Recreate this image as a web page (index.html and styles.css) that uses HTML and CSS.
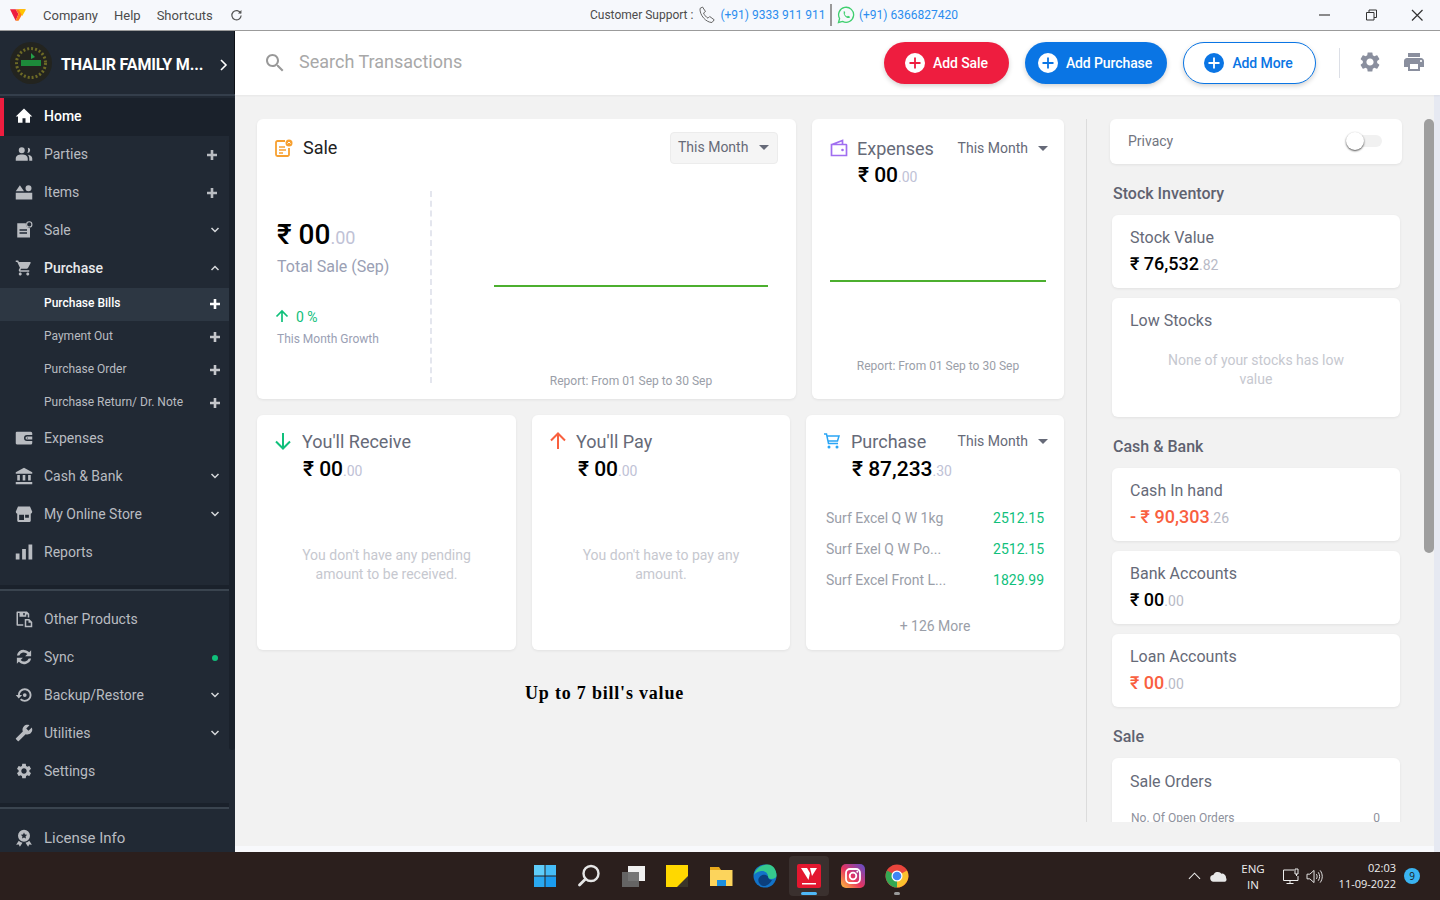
FILE: index.html
```html
<!DOCTYPE html>
<html lang="en">
<head>
<meta charset="utf-8">
<title>Vyapar</title>
<link rel="stylesheet" href="styles.css">
</head>
<body>
<svg class="sprite" xmlns="http://www.w3.org/2000/svg">
  <symbol id="i-home" viewBox="0 0 24 24"><path d="M10 21v-6h4v6h6v-8.500h3L12 2 1 12.500h3V21z"/></symbol>
  <symbol id="i-people" viewBox="0 0 24 24"><path d="M9 11a4 4 0 1 0 0-8 4 4 0 0 0 0 8zm7.500-.500a3 3 0 0 0 .5-6.800c.8 2.300.6 4.800-.5 6.800zM1 21v-3c0-3.500 3-5.500 8-5.500s8 2 8 5.500v3zm18 0h4v-3c0-2.500-2-4.500-6-5 1.500 1.300 2 3 2 5z"/></symbol>
  <symbol id="i-items" viewBox="0 0 24 24"><path d="M1 11l5.500-8 5.500 8zM18 11a4 4 0 1 0 0-8 4 4 0 0 0 0 8zM1 13h22v9H1z"/></symbol>
  <symbol id="i-sale" viewBox="0 0 24 24"><path d="M3 3h11.500c-.5 3 1.500 6 5.500 6.500V22H3zm3 8v2h10v-2zm0 4v2h10v-2z"/><circle cx="19" cy="4.500" r="3.500" fill="none" stroke="currentColor" stroke-width="1.500"/></symbol>
  <symbol id="i-cart" viewBox="0 0 24 24"><path d="M7 18c-1.100 0-1.990.9-1.990 2S5.900 22 7 22s2-.9 2-2-.9-2-2-2zM1 2v2h2l3.600 7.590-1.350 2.450c-.16.28-.25.61-.25.96 0 1.100.9 2 2 2h12v-2H7.420c-.14 0-.25-.11-.25-.25l.03-.12.9-1.630h7.450c.75 0 1.410-.41 1.750-1.030l3.580-6.490c.08-.14.12-.31.12-.48 0-.55-.45-1-1-1H5.210l-.94-2H1zm16 16c-1.100 0-1.990.9-1.990 2s.89 2 1.990 2 2-.9 2-2-.9-2-2-2z"/></symbol>
  <symbol id="i-wallet" viewBox="0 0 24 24"><path d="M1 5a1.500 1.500 0 0 1 1.500-1.500H21A2 2 0 0 1 23 5.500V8h-7a4 4 0 0 0 0 8h7v2.500a2 2 0 0 1-2 2H2.500A1.500 1.500 0 0 1 1 19zM16 10h7v4h-7a2 2 0 0 1 0-4zm.5 1.200a.8.8 0 1 0 0 1.600.8.8 0 0 0 0-1.600z"/></symbol>
  <symbol id="i-bank" viewBox="0 0 24 24"><path d="M12 1L1 7v2h22V7zM3 10.500h3.500V18H3zm7.250 0h3.500V18h-3.500zm7.250 0H21V18h-3.500zM1 20h22v3H1z"/></symbol>
  <symbol id="i-store" viewBox="0 0 24 24"><path d="M4 2h16l3 7a3 3 0 0 1-2 2.800V21a1.500 1.500 0 0 1-1.500 1.500h-15A1.500 1.500 0 0 1 3 21v-9.200A3 3 0 0 1 1 9zm1.500 11v7h6.500v-7zm8 0v4h5v-4z"/></symbol>
  <symbol id="i-bars" viewBox="0 0 24 24"><path d="M1 14h5v8H1zM9.500 8h5v14h-5zM18 2h5v20h-5z"/></symbol>
  <symbol id="i-other" viewBox="0 0 24 24"><path d="M3 2h13l3 3v5h-2V6h-2v3H6V4H4v15h7v2H3a1 1 0 0 1-1-1V3a1 1 0 0 1 1-1zm8 2v3h2V4z"/><path d="M13 12h6l4 4v7H13zm2 2v7h6v-4h-3v-3z"/></symbol>
  <symbol id="i-sync" viewBox="0 0 24 24"><path d="M12 2.500c2.800 0 5.300 1.200 7 3.200L21.500 3v8h-8l3-3A6.500 6.500 0 0 0 5.700 10H2.500A9.600 9.600 0 0 1 12 2.500zM2.500 13h8l-3 3a6.500 6.500 0 0 0 10.800-2h3.200a9.600 9.600 0 0 1-16.500 4.300L2.500 21z"/></symbol>
  <symbol id="i-backup" viewBox="0 0 24 24"><path d="M13 3c-4.970 0-9 4.030-9 9H1l4 4.500L9.500 12H6.500c0-3.600 2.900-6.500 6.500-6.500s6.500 2.900 6.500 6.500-2.900 6.500-6.500 6.500c-1.800 0-3.400-.7-4.600-1.900L6.600 18.400C8.270 20 10.510 21 13 21c4.970 0 9-4.030 9-9s-4.030-9-9-9z"/><circle cx="13" cy="12" r="2.500"/></symbol>
  <symbol id="i-wrench" viewBox="0 0 24 24"><path transform="matrix(-1 0 0 1 24 0)" d="M22.700 19l-9.100-9.100c.9-2.300.4-5-1.500-6.900-2-2-5-2.400-7.400-1.300L9 6 6 9 1.600 4.700C.4 7.100.9 10.100 2.900 12.100c1.900 1.900 4.600 2.400 6.900 1.500l9.100 9.100c.4.4 1 .4 1.400 0l2.300-2.300c.5-.4.500-1.100.1-1.400z"/></symbol>
  <symbol id="i-gear" viewBox="0 0 24 24"><path d="M19.140 12.940c.04-.3.06-.61.06-.94 0-.32-.02-.64-.07-.94l2.030-1.580c.18-.14.23-.41.12-.61l-1.920-3.320c-.12-.22-.37-.29-.59-.22l-2.390.96c-.5-.38-1.030-.7-1.620-.94l-.36-2.540c-.04-.24-.24-.41-.48-.41h-3.840c-.24 0-.43.17-.47.41l-.36 2.540c-.59.24-1.130.57-1.620.94l-2.390-.96c-.22-.08-.47 0-.59.22L2.740 8.870c-.12.21-.08.47.12.61l2.030 1.580c-.05.3-.09.63-.09.94s.02.64.07.94l-2.030 1.580c-.18.14-.23.41-.12.61l1.920 3.320c.12.22.37.29.59.22l2.390-.96c.5.38 1.030.7 1.620.94l.36 2.540c.05.24.24.41.48.41h3.840c.24 0 .44-.17.47-.41l.36-2.540c.59-.24 1.130-.56 1.620-.94l2.390.96c.22.08.47 0 .59-.22l1.920-3.320c.12-.22.07-.47-.12-.61l-2.010-1.580zM12 15.600c-1.980 0-3.600-1.620-3.600-3.600s1.620-3.600 3.600-3.600 3.600 1.620 3.600 3.600-1.620 3.600-3.600 3.600z"/></symbol>
  <symbol id="i-award" viewBox="0 0 24 24"><path d="M12 1a8 8 0 1 0 0 16 8 8 0 0 0 0-16zm0 3.500l1.300 2.700 3 .4-2.200 2.100.5 3L12 11.300l-2.600 1.400.5-3-2.200-2.100 3-.4zM5 15.500L1.500 21l3.500-.3L6.500 23.500 10 18.200a9 9 0 0 1-5-2.700zm14 0a9 9 0 0 1-5 2.700l3.500 5.300 1.500-2.800 3.500.3z"/></symbol>
  <symbol id="i-plus" viewBox="0 0 12 12"><path d="M4.700 1h2.600v3.700H11v2.600H7.300V11H4.700V7.300H1V4.700h3.700z"/></symbol>
  <symbol id="i-down" viewBox="0 0 12 12"><path d="M2.500 4l3.500 3.500L9.500 4" fill="none" stroke="currentColor" stroke-width="1.500"/></symbol>
  <symbol id="i-up" viewBox="0 0 12 12"><path d="M2.500 8L6 4.500 9.500 8" fill="none" stroke="currentColor" stroke-width="1.500"/></symbol>
  <symbol id="i-search" viewBox="0 0 24 24"><path d="M15.500 14h-.79l-.28-.27C15.410 12.590 16 11.110 16 9.500 16 5.910 13.090 3 9.500 3S3 5.910 3 9.500 5.910 16 9.500 16c1.610 0 3.090-.59 4.230-1.570l.27.28v.79l5 4.990L20.490 19l-4.990-5zm-6 0C7.010 14 5 11.990 5 9.500S7.010 5 9.500 5 14 7.010 14 9.500 11.990 14 9.500 14z"/></symbol>
  <symbol id="i-print" viewBox="0 0 24 24"><path d="M19 8H5c-1.660 0-3 1.340-3 3v6h4v4h12v-4h4v-6c0-1.660-1.340-3-3-3zm-3 11H8v-5h8v5zm3-7c-.55 0-1-.45-1-1s.45-1 1-1 1 .45 1 1-.45 1-1 1zm-1-9H6v4h12V3z"/></symbol>
  <symbol id="i-circle-plus" viewBox="0 0 20 20"><circle cx="10" cy="10" r="10"/><path d="M9.100 4.500h1.800v4.600h4.600v1.800h-4.600v4.600H9.100v-4.600H4.500V9.100h4.600z" fill="currentColor"/></symbol>
</svg>

<header class="titlebar">
  <div class="tb-left">
    <svg class="app-logo" viewBox="0 0 18 14"><path d="M0 1h6l3 5-3 7z" fill="#ee1d3f"/><path d="M6 1l3 5-3 7 3 0 7-12z" fill="#ff7a1a"/><path d="M9 1h8l-4 7z" fill="#ffc400"/></svg>
    <span class="menu-item">Company</span>
    <span class="menu-item">Help</span>
    <span class="menu-item">Shortcuts</span>
    <svg class="reload" viewBox="0 0 14 14"><path d="M11.500 4.500A5 5 0 1 0 12 7" fill="none" stroke="#555" stroke-width="1.300"/><path d="M8.500 4.800h3.800V1z" fill="#555"/></svg>
  </div>
  <div class="tb-support">
    <span>Customer Support :</span>
    <svg class="sup-ico" viewBox="0 0 18 18"><path d="M2 2.500L4.500 1l3 4.500-2 1.500c.8 2 2.500 4 4.500 5.200l1.700-1.700 4.500 3.300L14 16.500C8 16.500 1.500 9 2 2.500z" fill="none" stroke="#666" stroke-width="1"/></svg>
    <span class="sup-link">(+91) 9333 911 911</span>
    <i class="sup-sep"></i>
    <svg class="sup-ico" viewBox="0 0 18 18"><path d="M1.500 16.500l1.100-4A7.500 7.500 0 1 1 5.600 15.400z" fill="none" stroke="#3fcf6e" stroke-width="1.300"/><path d="M6 5.500l1.300-.5 1 2-.8 1c.6 1.100 1.400 1.900 2.500 2.500l1-.8 2 1-.5 1.300c-3 .9-7.100-3.500-5.500-6.500z" fill="#3fcf6e"/></svg>
    <span class="sup-link">(+91) 6366827420</span>
  </div>
  <div class="tb-win">
    <svg class="win-btn" viewBox="0 0 46 30"><path d="M17 15h11" stroke="#666" stroke-width="1.500"/></svg>
    <svg class="win-btn" viewBox="0 0 46 30"><path d="M18.500 12.500h7.500v7.500h-7.500zM21 12.500V10h7.500v7.500H26" fill="none" stroke="#333" stroke-width="1"/></svg>
    <svg class="win-btn" viewBox="0 0 46 30"><path d="M18 10l10.500 10.500M28.500 10L18 20.500" stroke="#333" stroke-width="1.200"/></svg>
  </div>
</header>

<div class="app">
  <aside class="sidebar">
    <div class="company">
      <svg class="company-logo" viewBox="0 0 42 42"><circle cx="21" cy="21" r="21" fill="#23241f"/><circle cx="21" cy="21" r="14.500" fill="none" stroke="#6d6a26" stroke-width="3" stroke-dasharray="2 2"/><path d="M11 18h20v6H11z" fill="#1d8a3a"/><path d="M21 11l4 4-4 2z" fill="#24a04a"/></svg>
      <span class="company-name">THALIR FAMILY M...</span>
      <svg class="company-arrow" viewBox="0 0 10 14"><path d="M2 2l5 5-5 5" fill="none" stroke="#fff" stroke-width="1.600"/></svg>
    </div>
    <div class="company-rule"></div>
    <div class="side-scroll">
      <nav class="nav">
        <a class="row row-home"><svg class="ico"><use href="#i-home"/></svg><span class="lab">Home</span></a>
        <a class="row"><svg class="ico"><use href="#i-people"/></svg><span class="lab">Parties</span><svg class="act-plus"><use href="#i-plus"/></svg></a>
        <a class="row"><svg class="ico"><use href="#i-items"/></svg><span class="lab">Items</span><svg class="act-plus"><use href="#i-plus"/></svg></a>
        <a class="row"><svg class="ico"><use href="#i-sale"/></svg><span class="lab">Sale</span><svg class="act-chev"><use href="#i-down"/></svg></a>
        <a class="row row-open"><svg class="ico"><use href="#i-cart"/></svg><span class="lab">Purchase</span><svg class="act-chev"><use href="#i-up"/></svg></a>
        <a class="sub sub-on"><span class="lab">Purchase Bills</span><svg class="sub-plus"><use href="#i-plus"/></svg></a>
        <a class="sub"><span class="lab">Payment Out</span><svg class="sub-plus"><use href="#i-plus"/></svg></a>
        <a class="sub"><span class="lab">Purchase Order</span><svg class="sub-plus"><use href="#i-plus"/></svg></a>
        <a class="sub"><span class="lab">Purchase Return/ Dr. Note</span><svg class="sub-plus"><use href="#i-plus"/></svg></a>
        <a class="row"><svg class="ico"><use href="#i-wallet"/></svg><span class="lab">Expenses</span></a>
        <a class="row"><svg class="ico"><use href="#i-bank"/></svg><span class="lab">Cash &amp; Bank</span><svg class="act-chev"><use href="#i-down"/></svg></a>
        <a class="row"><svg class="ico"><use href="#i-store"/></svg><span class="lab">My Online Store</span><svg class="act-chev"><use href="#i-down"/></svg></a>
        <a class="row"><svg class="ico"><use href="#i-bars"/></svg><span class="lab">Reports</span></a>
        <div class="nav-sep nav-sep-a"></div>
        <a class="row"><svg class="ico"><use href="#i-other"/></svg><span class="lab">Other Products</span></a>
        <a class="row"><svg class="ico"><use href="#i-sync"/></svg><span class="lab">Sync</span><i class="sync-dot"></i></a>
        <a class="row"><svg class="ico"><use href="#i-backup"/></svg><span class="lab">Backup/Restore</span><svg class="act-chev"><use href="#i-down"/></svg></a>
        <a class="row"><svg class="ico"><use href="#i-wrench"/></svg><span class="lab">Utilities</span><svg class="act-chev"><use href="#i-down"/></svg></a>
        <a class="row"><svg class="ico"><use href="#i-gear"/></svg><span class="lab">Settings</span></a>
        <div class="nav-sep nav-sep-b"></div>
        <a class="row row-license"><svg class="ico"><use href="#i-award"/></svg><span class="lab">License Info</span></a>
      </nav>
      <div class="side-rail"><div class="side-thumb"></div></div>
    </div>
  </aside>

  <main class="main">
    <div class="topbar">
      <svg class="search-ico"><use href="#i-search"/></svg>
      <span class="search-text">Search Transactions</span>
      <a class="btn btn-sale"><svg class="btn-ico"><use href="#i-circle-plus"/></svg>Add Sale</a>
      <a class="btn btn-purchase"><svg class="btn-ico"><use href="#i-circle-plus"/></svg>Add Purchase</a>
      <a class="btn btn-more"><svg class="btn-ico"><use href="#i-circle-plus"/></svg>Add More</a>
      <i class="top-sep"></i>
      <svg class="top-ico top-gear"><use href="#i-gear"/></svg>
      <svg class="top-ico top-print"><use href="#i-print"/></svg>
    </div>

    <div class="content">
      <div class="work">
        <div class="scroll">
          <div class="dash">
            <div class="dash-row dash-row-a">
              <section class="card sale-card">
                <div class="sale-head">
                  <svg class="card-ico" viewBox="0 0 18 18"><path d="M10 2H2.500A1.500 1.500 0 0 0 1 3.500v12A1.500 1.500 0 0 0 2.500 17h10a1.500 1.500 0 0 0 1.500-1.500V9" fill="none" stroke="#f7a030" stroke-width="1.800"/><path d="M4 8h6M4 11h7M4 14h4" stroke="#f7a030" stroke-width="1.400"/><circle cx="14" cy="4" r="3.500" fill="#f7a030"/><path d="M12.500 4.500L14 3l1.500 1.500" fill="none" stroke="#fff" stroke-width="1"/></svg>
                  <h2 class="sale-title">Sale</h2>
                  <div class="drop-box">This Month<i class="caret"></i></div>
                </div>
                <div class="sale-body">
                  <div class="sale-stats">
                    <div class="amt-xl">₹ 00<span class="dec-xl">.00</span></div>
                    <div class="stat-label">Total Sale (Sep)</div>
                    <div class="growth">
                      <svg class="growth-ico" viewBox="0 0 14 14"><path d="M7 13V2M1.500 7.500L7 2l5.500 5.500" fill="none" stroke="#10c07b" stroke-width="1.700"/></svg>
                      <span>0 %</span>
                    </div>
                    <div class="growth-label">This Month Growth</div>
                  </div>
                  <div class="sale-chart">
                    <div class="chart-line"></div>
                    <div class="report report-sale">Report: From 01 Sep to 30 Sep</div>
                  </div>
                </div>
              </section>

              <section class="card exp-card">
                <div class="mini-head">
                  <svg class="card-ico" viewBox="0 0 18 18"><path d="M2 5.500L12.500 1.500V5M1.500 5.500h14.500a.5.5 0 0 1 .5.5v10.500H1.500z" fill="none" stroke="#a06ef0" stroke-width="1.700"/><circle cx="12.500" cy="11" r="1.300" fill="#a06ef0"/></svg>
                  <h2 class="mini-title">Expenses</h2>
                  <div class="drop-plain">This Month<i class="caret"></i></div>
                </div>
                <div class="amt-md">₹ 00<span class="dec-md">.00</span></div>
                <div class="chart-line exp-line"></div>
                <div class="report report-exp">Report: From 01 Sep to 30 Sep</div>
              </section>
            </div>

            <div class="dash-row dash-row-b">
              <section class="card mini-card">
                <div class="mini-head">
                  <svg class="card-ico" viewBox="0 0 18 18"><path d="M9 1v15M2 9.500L9 16.500l7-7" fill="none" stroke="#10c07b" stroke-width="2"/></svg>
                  <h2 class="mini-title">You'll Receive</h2>
                </div>
                <div class="amt-md">₹ 00<span class="dec-md">.00</span></div>
                <p class="empty">You don't have any pending<br>amount to be received.</p>
              </section>
              <section class="card mini-card card-pay">
                <div class="mini-head">
                  <svg class="card-ico" viewBox="0 0 18 18"><path d="M9 17V2M2 8.500L9 1.500l7 7" fill="none" stroke="#f9603f" stroke-width="2"/></svg>
                  <h2 class="mini-title">You'll Pay</h2>
                </div>
                <div class="amt-md">₹ 00<span class="dec-md">.00</span></div>
                <p class="empty">You don't have to pay any<br>amount.</p>
              </section>
              <section class="card mini-card">
                <div class="mini-head">
                  <svg class="card-ico" viewBox="0 0 18 18"><path d="M1 2h2.500l2 9.500h9.500M4 4h12l-1.500 5H5" fill="none" stroke="#2aa5f5" stroke-width="1.500"/><circle cx="6" cy="15" r="1.500" fill="#2aa5f5"/><circle cx="14" cy="15" r="1.500" fill="#2aa5f5"/></svg>
                  <h2 class="mini-title">Purchase</h2>
                  <div class="drop-plain">This Month<i class="caret"></i></div>
                </div>
                <div class="amt-md">₹ 87,233<span class="dec-md">.30</span></div>
                <ul class="tx-list">
                  <li class="tx"><span>Surf Excel Q W 1kg</span><b class="tx-val">2512.15</b></li>
                  <li class="tx"><span>Surf Exel Q W Po...</span><b class="tx-val">2512.15</b></li>
                  <li class="tx"><span>Surf Excel Front L...</span><b class="tx-val">1829.99</b></li>
                </ul>
                <div class="tx-more">+ 126 More</div>
              </section>
            </div>
            <div class="bill-note">Up to 7 bill's value</div>
          </div>

          <div class="vline"></div>

          <div class="side-panel">
            <div class="card privacy">
              <span class="privacy-text">Privacy</span>
              <div class="toggle"><i class="knob"></i></div>
            </div>
            <h3 class="group">Stock Inventory</h3>
            <div class="card stat"><div class="stat-title">Stock Value</div><div class="stat-val">₹ 76,532<span class="dec-sm">.82</span></div></div>
            <div class="card stat stat-low"><div class="stat-title">Low Stocks</div><p class="empty low-text">None of your stocks has low<br>value</p></div>
            <h3 class="group">Cash &amp; Bank</h3>
            <div class="card stat"><div class="stat-title">Cash In hand</div><div class="stat-val val-red">- ₹ 90,303<span class="dec-sm">.26</span></div></div>
            <div class="card stat"><div class="stat-title">Bank Accounts</div><div class="stat-val">₹ 00<span class="dec-sm">.00</span></div></div>
            <div class="card stat"><div class="stat-title">Loan Accounts</div><div class="stat-val val-red">₹ 00<span class="dec-sm">.00</span></div></div>
            <h3 class="group">Sale</h3>
            <div class="card stat stat-orders"><div class="stat-title">Sale Orders</div><div class="orders-row"><span>No. Of Open Orders</span><span>0</span></div></div>
          </div>

          <div class="scroll-thumb"></div>
        </div>
        <div class="strip"></div>
      </div>
      <div class="rail"></div>
    </div>
  </main>
</div>

<footer class="taskbar">
  <div class="task-spacer"></div>
  <div class="task-apps">
    <div class="task-cell"><svg class="task-ico" viewBox="0 0 24 24"><path d="M1 1h10.500v10.500H1z" fill="#5fcdfa"/><path d="M12.500 1H23v10.500H12.500z" fill="#45bdf8"/><path d="M1 12.500h10.500V23H1z" fill="#2aa8f0"/><path d="M12.500 12.500H23V23H12.500z" fill="#1a9cf0"/></svg></div>
    <div class="task-cell"><svg class="task-ico" viewBox="0 0 24 24"><circle cx="14" cy="9.500" r="7.500" fill="none" stroke="#e6e6e6" stroke-width="2.400"/><path d="M8.500 15l-6 6" stroke="#e6e6e6" stroke-width="2.800" stroke-linecap="round"/></svg></div>
    <div class="task-cell"><svg class="task-ico" viewBox="0 0 24 24"><rect x="7" y="2" width="17" height="15" fill="#f0f0f0"/><rect x="1" y="8" width="17" height="15" fill="#6a6a6a" opacity=".92"/></svg></div>
    <div class="task-cell"><svg class="task-ico" viewBox="0 0 24 24"><rect x="1" y="1" width="22" height="22" fill="#ffd800"/><path d="M12 23l11-11v11z" fill="#3a342a"/></svg></div>
    <div class="task-cell"><svg class="task-ico" viewBox="0 0 24 24"><path d="M1 3h9l2 3H1z" fill="#e8a91c"/><path d="M1 6h22.500v16H1z" fill="#fcd45c"/><path d="M8 16h9v6H8z" fill="#1a8fe0"/></svg></div>
    <div class="task-cell"><svg class="task-ico" viewBox="0 0 24 24"><circle cx="12" cy="12" r="11.500" fill="#1273c9"/><path d="M1 11C3 3 10 .5 15 .5c5 0 8.500 5 8.500 11 0 2-2 3.500-5.500 3.500-2 0-3-1-3-2.500C15 9 12 6.500 8 7 4 7.500 2 9.500 1 11z" fill="#35c98e"/><path d="M15 12.500c0 2 1.500 3.500 4 3.500-2 4-6 6.500-9 6-4-1-6.500-6-3-9.500 2.500-2.500 6-2 8 0z" fill="#0c3f7d"/></svg></div>
    <div class="task-cell task-active"><svg class="task-ico" viewBox="0 0 24 24"><rect width="24" height="24" rx="2" fill="#e3172f"/><path d="M4 4h6l3 5-1.500 7z" fill="#fff"/><path d="M13 4h7l-5 8z" fill="#fff"/><path d="M5 19h14v1.500H5z" fill="#fff"/></svg><i class="task-bar"></i></div>
    <div class="task-cell"><svg class="task-ico" viewBox="0 0 24 24"><defs><linearGradient id="ig" x1="0" y1="1" x2="1" y2="0"><stop offset="0" stop-color="#fdc23c"/><stop offset=".45" stop-color="#e8345f"/><stop offset="1" stop-color="#5a4fcf"/></linearGradient></defs><rect width="24" height="24" rx="5" fill="url(#ig)"/><rect x="5" y="5" width="14" height="14" rx="4" fill="none" stroke="#fff" stroke-width="1.800"/><circle cx="12" cy="12" r="3.300" fill="none" stroke="#fff" stroke-width="1.800"/><circle cx="16.300" cy="7.700" r="1" fill="#fff"/></svg></div>
    <div class="task-cell"><svg class="task-ico" viewBox="0 0 24 24"><circle cx="12" cy="12" r="11.500" fill="#e8453c"/><path d="M12 12L22 6.500A11.500 11.500 0 0 1 12 23.500z" fill="#fbc02d"/><path d="M12 12l-10 -5.500A11.500 11.500 0 0 0 12 23.500z" fill="#34a853"/><circle cx="12" cy="12" r="5.500" fill="#fff"/><circle cx="12" cy="12" r="4.300" fill="#3f85f4"/></svg><i class="task-dot"></i></div>
  </div>
  <div class="tray">
    <svg class="tray-chev" viewBox="0 0 14 8"><path d="M1 7l6-6 6 6" fill="none" stroke="#eee" stroke-width="1.100"/></svg>
    <svg class="tray-cloud" viewBox="0 0 18 11"><path d="M4 11a3.500 3.500 0 0 1-.5-7A5 5 0 0 1 12 2.500 4.300 4.300 0 0 1 17 7c1 1.500.5 4-1.500 4z" fill="#e8e8e8"/></svg>
    <div class="tray-lang">ENG<br>IN</div>
    <svg class="tray-net" viewBox="0 0 18 17"><path d="M12 2H1.500v10.500H16V8M8 12.500V15.500M4.500 15.500h7" fill="none" stroke="#eee" stroke-width="1"/><path d="M13 1h3v5h-3zM14.500 6v2" fill="none" stroke="#eee" stroke-width="1"/></svg>
    <svg class="tray-vol" viewBox="0 0 18 16"><path d="M1 5.500h3L8.500 1.500v13L4 10.500H1z" fill="none" stroke="#eee" stroke-width="1"/><path d="M11 5.500c1 1.500 1 3.500 0 5M13 3.500c2 3 2 6 0 9M15 1.500c3 4 3 9 0 13" fill="none" stroke="#eee" stroke-width="1"/></svg>
    <div class="tray-clock">02:03<br>11-09-2022</div>
    <div class="tray-badge">9</div>
  </div>
</footer>
</body>
</html>
```

FILE: styles.css
```css
* { box-sizing: border-box; }
html, body { margin: 0; padding: 0; width: 1440px; height: 900px; overflow: hidden; }
body { font-family: Roboto, "Liberation Sans", sans-serif; background: #f2f2f2; color: #333; display: flex; flex-direction: column; }
.sprite { display: none; }
h2, h3, p, ul { margin: 0; padding: 0; font-weight: 400; }
ul { list-style: none; }

/* title bar */
.titlebar { height: 31px; flex: none; background: #f6f8fc; border-bottom: 1px solid #9b9b9b; display: grid; grid-template-columns: 570px 1fr auto; align-items: center; font-size: 12px; color: #4c4c4c; }
.tb-left { display: flex; align-items: center; padding-left: 10px; }
.app-logo { width: 17px; height: 14px; margin-right: 16px; }
.menu-item { margin-right: 16px; font-size: 13px; }
.reload { width: 13px; height: 13px; margin-left: 1px; }
.tb-support { display: flex; align-items: center; padding-left: 20px; }
.sup-ico { width: 18px; height: 18px; margin: 0 4px 0 5px; flex: none; }
.sup-link { color: #2b8def; }
.sup-sep { width: 1.500px; height: 22px; background: #999; margin-left: 5px; margin-right: 0; }
.tb-win { display: flex; padding-right: 0; }
.win-btn { width: 46px; height: 30px; display: block; }

/* layout */
.app { display: flex; flex: none; height: 821px; }

/* sidebar */
.sidebar { width: 235px; flex: none; background: #212934; display: flex; flex-direction: column; overflow: hidden; }
.company { height: 63px; flex: none; display: flex; align-items: center; padding-left: 10px; border-right: 1px solid #0e1218; }
.company-logo { width: 42px; height: 42px; flex: none; }
.company-name { margin-left: 9px; margin-top: 4px; width: 158px; font-size: 16px; font-weight: 700; color: #fff; white-space: nowrap; letter-spacing: -.15px; }
.company-arrow { width: 10px; height: 14px; margin-top: 5px; }
.company-rule { height: 2px; flex: none; background: #343e4b; }
.side-scroll { flex: 1; display: flex; min-height: 0; padding-top: 2px; background: #212934; }
.nav { width: 229px; flex: none; }
.side-rail { width: 6px; flex: none; }
.side-thumb { height: 652px; background: #1a212b; border-radius: 0 0 3px 3px; }

.row { height: 38px; display: flex; align-items: center; padding: 0 8px 2px 15px; font-size: 14px; color: #b9bcc1; }
.row-home { background: #1a212b; border-left: 4px solid #ee1d3f; padding-left: 11px; color: #fff; font-weight: 500; }
.row-open { color: #e8e9eb; font-weight: 500; }
.ico { width: 18px; height: 18px; fill: #b9bcc1; color: #b9bcc1; flex: none; }
.row-home .ico { fill: #fff; }
.lab { margin-left: 11px; flex: 1; white-space: nowrap; }
.row-license .lab { font-size: 15px; }
.act-plus { width: 12px; height: 12px; fill: #b9bcc1; margin-right: 3px; margin-top: 2px; }
.act-chev { width: 12px; height: 12px; color: #d5d7da; fill: none; }
.sync-dot { width: 6px; height: 6px; border-radius: 50%; background: #10c07b; margin-right: 3px; margin-top: 1px; }
.sub { height: 33px; display: flex; align-items: center; padding: 0 8px 4px 44px; font-size: 12px; color: #b9bcc1; }
.sub .lab { margin-left: 0; }
.sub-on { background: #2d3743; color: #fff; font-weight: 500; }
.sub-plus { width: 12px; height: 12px; fill: #c5c7cb; margin-top: 3px; }
.sub-on .sub-plus { fill: #fff; }
.nav-sep { height: 6px; background: linear-gradient(#1a212b 0 4px, #3a444f 4px); }
.nav-sep-a { margin: 13px 0 10px; }
.nav-sep-b { margin: 12px 0 11px; }

/* main */
.main { width: 1205px; flex: none; display: flex; flex-direction: column; min-height: 0; }
.topbar { height: 64px; flex: none; background: #fff; display: flex; align-items: center; padding-left: 28px; padding-right: 14px; box-shadow: 0 1px 2px rgba(0, 0, 0, .05); position: relative; }
.search-ico { width: 24px; height: 24px; fill: #999; flex: none; margin-top: -1px; }
.search-text { font-size: 18px; color: #a8a8a8; margin: 0 0 4px 12px; flex: 1; }
.btn { height: 42px; border-radius: 21px; display: flex; align-items: center; justify-content: center; font-size: 14px; font-weight: 500; letter-spacing: -.1px; margin-left: 16px; box-shadow: 0 2px 5px rgba(0, 0, 0, .18); }
.btn-ico { width: 20px; height: 20px; margin-right: 8px; flex: none; }
.btn-sale { width: 125px; background: #ee1d3f; color: #fff; }
.btn-sale .btn-ico { fill: #fff; color: #ee1d3f; }
.btn-purchase { width: 142px; padding-right: 2px; background: #0a75e4; color: #fff; }
.btn-purchase .btn-ico { fill: #fff; color: #0a75e4; }
.btn-more { width: 133px; padding-right: 2px; background: #fff; color: #0a75e4; border: 1px solid #0a75e4; }
.btn-more .btn-ico { fill: #0a75e4; color: #fff; }
.top-sep { width: 1px; height: 30px; background: #dcdfe6; margin-left: 23px; margin-right: 18px; }
.top-ico { width: 24px; height: 24px; fill: #8a8f9e; flex: none; margin-top: -3px; }
.top-print { margin-left: 20px; }

.content { flex: 1; display: flex; min-height: 0; }
.work { width: 1199px; flex: none; background: #f2f2f2; padding-top: 24px; }
.rail { width: 6px; flex: none; background: #e6e9f2; }
.scroll { height: 703px; display: flex; padding-left: 22px; overflow: hidden; }
.strip { height: 6px; margin-top: 24px; background: #f8f9fc; }
.vline { width: 1px; flex: none; background: #dcdcdc; margin: 0 23px 0 22px; }
.scroll-thumb { width: 10px; height: 434px; flex: none; background: #9e9e9e; border-radius: 5px; margin-left: 22px; }

.dash { width: 807px; flex: none; }
.dash-row { display: grid; column-gap: 16px; }
.dash-row-a { grid-template-columns: 539px 252px; height: 280px; }
.dash-row-b { grid-template-columns: 259px 258px 258px; height: 235px; margin-top: 16px; }
.card { background: #fff; border-radius: 6px; box-shadow: 0 1px 3px rgba(0, 0, 0, .07); display: flow-root; }

/* sale */
.sale-head { display: flex; align-items: center; height: 32px; margin-top: 13px; padding: 0 18px; }
.card-ico { width: 18px; height: 18px; flex: none; }
.sale-title { font-size: 18px; color: #222; margin: 0 0 2px 10px; flex: 1; }
.drop-box { width: 108px; height: 32px; background: #f5f5f5; border: 1px solid #ececec; border-radius: 4px; display: flex; align-items: center; padding: 0 0 2px 7px; font-size: 14px; color: #666a78; }
.caret { width: 0; height: 0; border-left: 5px solid transparent; border-right: 5px solid transparent; border-top: 5px solid #666a78; margin-left: 10px; }
.drop-box .caret { margin-left: 11px; }
.sale-body { display: flex; margin-top: 27px; height: 192px; }
.sale-stats { width: 175px; flex: none; border-right: 2px dashed #e4e6ee; padding-left: 20px; padding-top: 27px; }
.amt-xl { font-size: 28px; line-height: 34px; font-weight: 500; color: #000; white-space: nowrap; }
.dec-xl { font-size: 18px; font-weight: 400; color: #c0c2d6; }
.stat-label { font-size: 16px; line-height: 20px; color: #9aa0b4; margin-top: 2px; }
.growth { display: flex; align-items: center; margin-top: 30px; font-size: 14px; line-height: 20px; color: #10c07b; margin-left: -2px; }
.growth-ico { width: 14px; height: 14px; margin-right: 7px; margin-top: -2px; }
.growth-label { font-size: 12px; line-height: 16px; color: #9aa0b4; margin-top: 4px; }
.sale-chart { width: 274px; margin-left: 62px; }
.chart-line { height: 2px; background: #4caf2f; }
.sale-chart .chart-line { margin-top: 94px; }
.report { font-size: 12px; line-height: 16px; color: #9a9ea8; text-align: center; white-space: nowrap; }
.report-sale { margin-top: 86px; }

/* small cards */
.mini-head { display: flex; align-items: center; height: 28px; margin-top: 12px; padding: 0 16px 0 17px; }
.exp-card .mini-head { margin-top: 15px; padding-left: 18px; }
.mini-title { font-size: 18px; color: #666a78; margin-left: 10px; flex: 1; white-space: nowrap; }
.exp-card .mini-title { margin-left: 9px; }
.card-pay .mini-title { margin-left: 9px; }
.drop-plain { display: flex; align-items: center; font-size: 14px; color: #666a78; }
.amt-md { padding: 0 0 0 46px; font-size: 21px; line-height: 26px; font-weight: 500; color: #000; white-space: nowrap; }
.mini-card .amt-md { padding-top: 1px; }
.dec-md { font-size: 14px; font-weight: 400; color: #c0c2d6; }
.exp-line { margin: 90px 18px 0; }
.report-exp { margin-top: 76px; }
.empty { font-size: 14px; line-height: 19px; color: #c6c8cf; text-align: center; }
.mini-card .empty { margin-top: 62px; }
.tx-list { margin-top: 19px; padding: 0 20px; }
.tx { display: flex; justify-content: space-between; font-size: 14px; line-height: 31px; color: #9a9ea8; white-space: nowrap; }
.tx-val { font-weight: 400; color: #10c07b; }
.tx-more { margin-top: 20px; text-align: center; font-size: 14px; line-height: 20px; color: #9a9ea8; }
.bill-note { font-family: "Liberation Serif", serif; font-weight: 700; font-size: 18px; line-height: 22px; letter-spacing: .8px; color: #000; margin: 32px 0 0 268px; white-space: nowrap; }

/* right panel */
.side-panel { width: 292px; flex: none; }
.privacy { height: 45px; display: flex; align-items: center; justify-content: space-between; padding: 0 20px 0 18px; font-size: 14px; color: #72757f; }
.privacy-text { margin-bottom: 2px; }
.toggle { width: 36px; height: 12px; border-radius: 6px; background: #f1f1f1; display: flex; align-items: center; margin-top: -1px; }
.knob { width: 18px; height: 18px; border-radius: 50%; background: #fff; box-shadow: 0 1px 2px rgba(0, 0, 0, .7); }
.group { font-size: 16px; line-height: 22px; font-weight: 500; color: #5f6270; margin: 19px 0 10px 3px; }
.stat { margin: 0 2px 10px; height: 73px; padding: 11px 18px 0; }
.stat-title { font-size: 16px; line-height: 24px; color: #666a78; }
.stat-val { font-size: 18px; line-height: 27px; font-weight: 500; color: #000; white-space: nowrap; }
.dec-sm { font-size: 14px; font-weight: 400; color: #b8bac6; }
.val-red { color: #f9603f; }
.stat-low { height: 119px; margin-bottom: 0; }
.low-text { margin-top: 18px; }
.stat-orders { height: 120px; margin-bottom: 0; padding-top: 12px; }
.orders-row { display: flex; justify-content: space-between; font-size: 12px; line-height: 16px; color: #8e919c; margin: 16px 2px 0 1px; }

/* taskbar */
.taskbar { height: 48px; flex: none; background: #2b1f1d; display: grid; grid-template-columns: 523px 396px 1fr; align-items: center; color: #eee; }
.task-apps { display: flex; }
.task-cell { width: 44px; height: 48px; display: flex; align-items: center; justify-content: center; position: relative; }
.task-ico { width: 24px; height: 24px; }
.task-active::before { content: ""; position: absolute; left: 2px; top: 4px; width: 40px; height: 40px; border-radius: 4px; background: #3a302e; }
.task-active .task-ico { position: relative; }
.task-bar { position: absolute; left: 14px; bottom: 5px; width: 16px; height: 3px; border-radius: 2px; background: #4fb8f7; }
.task-dot { position: absolute; left: 19px; bottom: 5px; width: 6px; height: 3px; border-radius: 2px; background: #9a9a9a; }
.tray { display: flex; align-items: center; justify-content: flex-end; padding-right: 20px; font-family: "Open Sans", "Noto Sans", sans-serif; font-size: 11px; line-height: 16px; }
.tray-chev { width: 13px; height: 8px; margin-right: 9px; }
.tray-cloud { width: 17px; height: 11px; margin-right: 11px; }
.tray-lang { width: 30px; text-align: center; margin: 1px 14px 0 0; font-size: 11.500px; }
.tray-net { width: 18px; height: 17px; margin-right: 6px; }
.tray-vol { width: 17px; height: 15px; margin-right: 11px; }
.tray-clock { text-align: right; width: 62px; margin-right: 8px; }
.tray-badge { width: 16px; height: 16px; border-radius: 50%; background: #3ab4f2; color: #1c1c1c; font-size: 10px; line-height: 16px; text-align: center; }
```
